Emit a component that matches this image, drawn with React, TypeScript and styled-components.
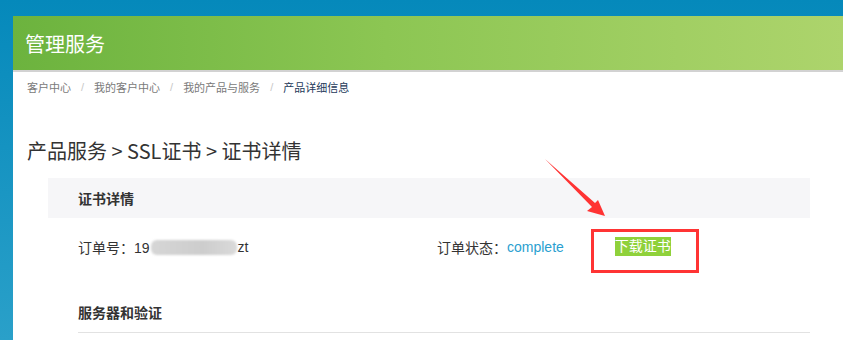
import React from "react";
import styled, { createGlobalStyle } from "styled-components";

const Global = createGlobalStyle`
  html, body { margin: 0; padding: 0; }
  body {
    font-family: "Liberation Sans", "Noto Sans CJK SC", sans-serif;
    background: #fff;
  }
`;

const Frame = styled.div`
  position: relative;
  width: 843px;
  height: 340px;
  overflow: hidden;
  background: linear-gradient(180deg, #0589bb 0%, #2aa0c9 100%);
  padding: 16px 0 0 13px;
  box-sizing: border-box;
`;

const Main = styled.div`
  background: #fff;
  height: 100%;
  display: flex;
  flex-direction: column;
`;

const Header = styled.div`
  height: 54px;
  background: linear-gradient(90deg, #6cb33e 0%, #8cc653 45%, #add46c 100%);
  border-bottom: 2px solid #d2d2d2;
  display: flex;
  align-items: center;
  padding-left: 12px;
  color: #fff;
  font-size: 20px;
  font-family: "Noto Sans CJK SC", sans-serif;
  box-sizing: content-box;
`;

const Crumbs = styled.div`
  display: flex;
  align-items: center;
  height: 28px;
  padding-left: 14px;
  margin-top: 1px;
  font-size: 11px;
  color: #7a7a7a;
`;

const Crumb = styled.span<{ $active?: boolean }>`
  color: ${(p) => (p.$active ? "#1d3a5a" : "#7a7a7a")};
`;

const Sep = styled.span`
  color: #c8c8c8;
  padding: 0 10px;
`;

const Title = styled.h1`
  margin: 36px 0 0 14px;
  font-family: "Noto Sans CJK SC", sans-serif;
  font-size: 20px;
  font-weight: 400;
  line-height: 28px;
  color: #333;
`;

const Card = styled.div`
  margin: 13px 33px 0 35px;
  display: flex;
  flex-direction: column;
`;

const CardHeader = styled.div`
  height: 40px;
  background: #f6f6f8;
  display: flex;
  align-items: center;
  padding-left: 30px;
  font-size: 14px;
  font-weight: 700;
  color: #333;
`;

const Row = styled.div`
  display: flex;
  align-items: center;
  padding-left: 30px;
  margin-top: 7px;
  height: 44px;
  font-size: 14px;
  color: #333;
`;

const Field = styled.div<{ $w?: number }>`
  display: flex;
  align-items: center;
  width: ${(p) => (p.$w ? `${p.$w}px` : "auto")};
`;

const Blur = styled.span`
  display: inline-block;
  width: 86px;
  height: 15px;
  border-radius: 6px;
  background: linear-gradient(90deg, #d6d6d6, #cdcdcd 60%, #dadada);
  filter: blur(1px);
  margin: 0 1px;
`;

const Status = styled.span`
  color: #2a9fd0;
`;

const Highlight = styled.div`
  margin: 8px 0 0 27px;
  width: 108px;
  height: 44px;
  box-sizing: border-box;
  border: 3px solid #ff3434;
  display: flex;
  align-items: flex-start;
  padding: 5px 0 0 21px;
`;

const DownloadBtn = styled.span`
  background: #8fd13b;
  color: #fff;
  font-size: 14px;
  line-height: 19px;
`;

const SectionTitle = styled.div`
  margin: 23px 0 0 30px;
  height: 40px;
  display: flex;
  align-items: center;
  font-size: 14px;
  font-weight: 700;
  color: #333;
  border-bottom: 1px solid #e2e2e2;
`;

const Arrow = styled.svg`
  position: absolute;
  left: 540px;
  top: 155px;
`;

export default function App() {
  return (
    <>
      <Global />
      <Frame>
        <Main>
          <Header>管理服务</Header>
          <Crumbs>
            <Crumb>客户中心</Crumb>
            <Sep>/</Sep>
            <Crumb>我的客户中心</Crumb>
            <Sep>/</Sep>
            <Crumb>我的产品与服务</Crumb>
            <Sep>/</Sep>
            <Crumb $active>产品详细信息</Crumb>
          </Crumbs>
          <Title>产品服务 &gt; SSL证书 &gt; 证书详情</Title>
          <Card>
            <CardHeader>证书详情</CardHeader>
            <Row>
              <Field $w={359}>
                订单号：19<Blur />zt
              </Field>
              <Field>
                订单状态：<Status>complete</Status>
              </Field>
              <Highlight>
                <DownloadBtn>下载证书</DownloadBtn>
              </Highlight>
            </Row>
            <SectionTitle>服务器和验证</SectionTitle>
          </Card>
        </Main>
        <Arrow width="70" height="66" viewBox="0 0 70 66">
          <path
            d="M5 4 L52 52 L47 56 L65 61 L58 45 L55 48 Z"
            fill="#ff3333"
          />
        </Arrow>
      </Frame>
    </>
  );
}
